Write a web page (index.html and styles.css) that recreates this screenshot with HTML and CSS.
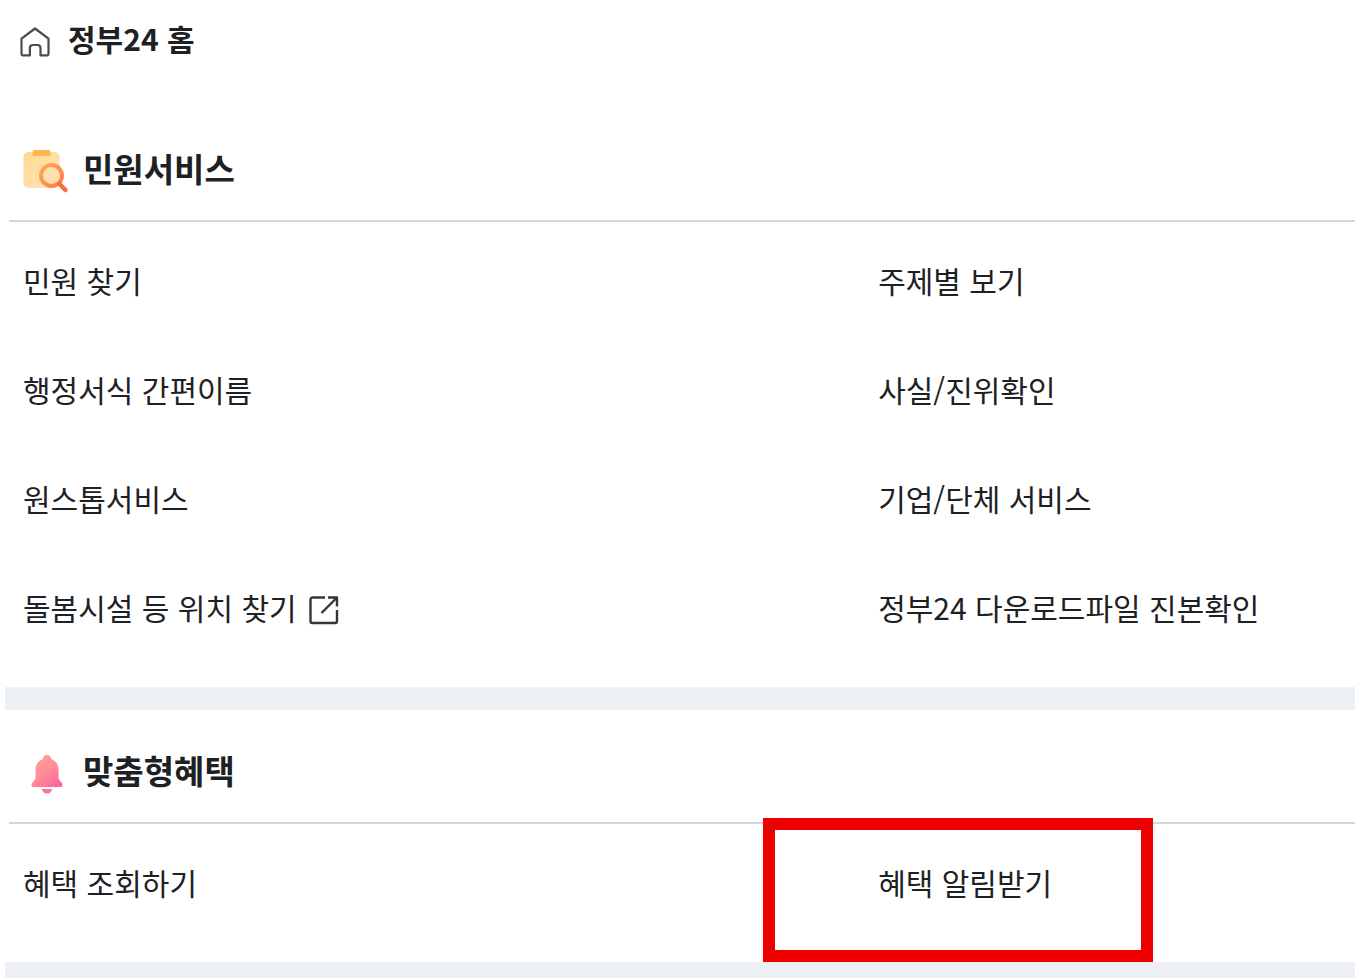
FILE: index.html
```
<!DOCTYPE html>
<html lang="ko">
<head>
  <meta charset="UTF-8">
  <meta name="viewport" content="width=device-width, initial-scale=1">
  <title>정부24</title>
  <link rel="stylesheet" href="styles.css">
</head>
<body>
  <header class="home">
    <a href="#" class="home-link">
      <svg class="icon-home" viewBox="0 0 30 30" fill="none" stroke="#464c53" stroke-width="2.200" stroke-linejoin="round" aria-hidden="true">
        <path d="M1.500 11.600 15 1.500l13.500 10.100V27a1.300 1.300 0 0 1-1.300 1.300h-6.700v-7.300a3 3 0 0 0-3-3h-4.600a3 3 0 0 0-3 3v7.300H2.800A1.300 1.300 0 0 1 1.500 27z"/>
      </svg>
      <span>정부24 홈</span>
    </a>
  </header>

  <main>
    <section class="menu">
      <h2 class="menu-title">
        <svg class="icon-menu" viewBox="0 0 46 46" aria-hidden="true">
          <defs>
            <linearGradient id="board" x1="0" y1="0" x2="1" y2="1">
              <stop offset="0" stop-color="#ffd993"/>
              <stop offset="1" stop-color="#ffe5b4"/>
            </linearGradient>
            <linearGradient id="lens" x1="0" y1="0" x2="1" y2="1">
              <stop offset="0" stop-color="#ffa95c"/>
              <stop offset="1" stop-color="#ff7a48"/>
            </linearGradient>
          </defs>
          <rect x="0.500" y="3" width="36" height="36" rx="5" fill="url(#board)"/>
          <rect x="9.500" y="1" width="18" height="6" rx="2" fill="#ffb54f"/>
          <circle cx="28.500" cy="26.500" r="10.500" fill="#ffe0ad" stroke="url(#lens)" stroke-width="4"/>
          <path d="m36.500 35 6 6" stroke="#ff693f" stroke-width="4.500" stroke-linecap="round"/>
        </svg>
        민원서비스
      </h2>
      <ul class="menu-list">
        <li><a href="#">민원 찾기</a></li>
        <li><a href="#">주제별 보기</a></li>
        <li><a href="#">행정서식 간편이름</a></li>
        <li><a href="#">사실/진위확인</a></li>
        <li><a href="#">원스톱서비스</a></li>
        <li><a href="#">기업/단체 서비스</a></li>
        <li>
          <a href="#">돌봄시설 등 위치 찾기
            <svg class="icon-link" viewBox="0 0 30 30" fill="none" stroke="#33363d" stroke-width="2.400" stroke-linejoin="round" aria-hidden="true">
              <path d="M16 2.500H3.500a2 2 0 0 0-2 2V26a2 2 0 0 0 2 2H26a2 2 0 0 0 2-2V15M19 2.500h9v9M28 2.500 12.500 18"/>
            </svg>
          </a>
        </li>
        <li><a href="#">정부24 다운로드파일 진본확인</a></li>
      </ul>
    </section>

    <section class="menu">
      <h2 class="menu-title">
        <svg class="icon-menu" viewBox="0 0 46 46" aria-hidden="true">
          <defs>
            <linearGradient id="bell" x1="0.200" y1="0" x2="0.900" y2="1">
              <stop offset="0" stop-color="#ff9f9b"/>
              <stop offset="0.500" stop-color="#ff8c97"/>
              <stop offset="1" stop-color="#ff5f98"/>
            </linearGradient>
          </defs>
          <path d="M24 4c-2.300 0-4 1.600-4.200 4C15.300 9.800 12.500 13.500 12.500 18.500v7c0 2.500-.800 3.500-2.300 5.200-1 1.100-1.700 2.100-1.700 3.300 0 1.200.900 2 2.200 2h26.600c1.300 0 2.200-.800 2.200-2 0-1.200-.700-2.200-1.700-3.300-1.500-1.700-2.300-2.700-2.300-5.200v-7c0-5-2.800-8.700-7.300-10.500C28 5.600 26.300 4 24 4z" fill="url(#bell)"/>
          <path d="M19 38h10c0 2.600-2.300 4.500-5 4.500S19 40.600 19 38z" fill="#ff7394"/>
        </svg>
        맞춤형혜택
      </h2>
      <ul class="menu-list">
        <li><a href="#">혜택 조회하기</a></li>
        <li><a href="#" class="marked">혜택 알림받기</a></li>
      </ul>
    </section>
  </main>
</body>
</html>
```
FILE: styles.css
```
*,
*::after {
  box-sizing: border-box;
}
body {
  display: flex;
  flex-direction: column;
  min-height: 100vh;
  margin: 0;
  padding: 0 3px 0 5px;
  background: #fff;
  color: #1e2124;
  font-family: "Noto Sans CJK KR", sans-serif;
  font-size: 30px;
  line-height: 44px;
}
a {
  color: inherit;
  text-decoration: none;
}
.home {
  height: 108px;
  padding: 16px 15px;
}
.home-link {
  display: inline-flex;
  align-items: center;
  gap: 18px;
  font-weight: 700;
}
.icon-home {
  width: 30px;
  height: 30px;
  margin-top: 8px;
}
main {
  display: flex;
  flex: 1;
  flex-direction: column;
  background: #edf1f6;
}
.menu {
  margin-bottom: 23px;
  padding-left: 4px;
  background: #fff;
}
.menu:last-child {
  margin-bottom: 0;
}
.menu-title {
  display: flex;
  align-items: center;
  gap: 14px;
  height: 114px;
  margin: 0;
  padding: 8px 14px 0;
  border-bottom: 2px solid #d3d7db;
  font-size: 33px;
  font-weight: 700;
}
.icon-menu {
  width: 46px;
  height: 46px;
  margin-top: 8px;
}
.menu-list {
  display: grid;
  grid-template-columns: 642fr 358fr;
  margin: 0;
  padding: 3px 0 26px 14px;
  list-style: none;
}
.menu-list li {
  display: flex;
  align-items: center;
  height: 109px;
}
.menu-list a {
  display: inline-flex;
  align-items: center;
  gap: 12px;
}
.icon-link {
  width: 30px;
  height: 30px;
  margin-top: 6px;
}

/* red frame around the highlighted link */
.marked {
  position: relative;
}
.marked::after {
  content: "";
  position: absolute;
  top: -42px;
  left: -115px;
  width: 390px;
  height: 144px;
  border: 12px solid #ee0000;
}
```
